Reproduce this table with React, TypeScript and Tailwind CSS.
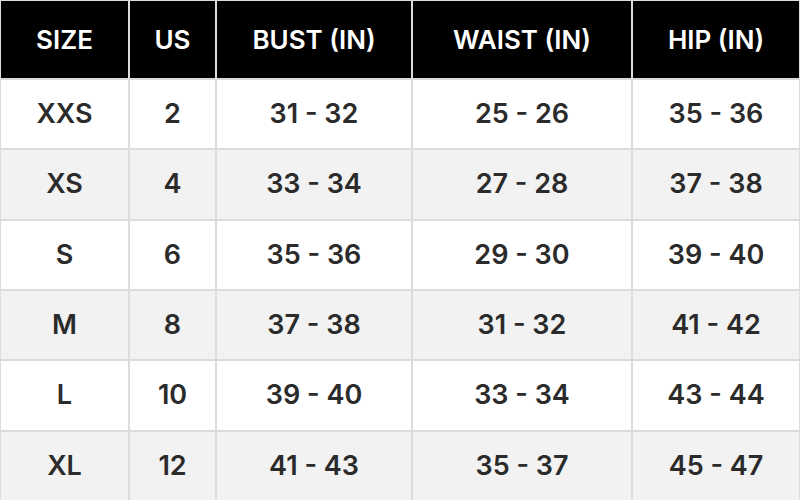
import React from "react";

const headers = ["SIZE", "US", "BUST (IN)", "WAIST (IN)", "HIP (IN)"];
const rows = [
  ["XXS", "2", "31 - 32", "25 - 26", "35 - 36"],
  ["XS", "4", "33 - 34", "27 - 28", "37 - 38"],
  ["S", "6", "35 - 36", "29 - 30", "39 - 40"],
  ["M", "8", "37 - 38", "31 - 32", "41 - 42"],
  ["L", "10", "39 - 40", "33 - 34", "43 - 44"],
  ["XL", "12", "41 - 43", "35 - 37", "45 - 47"],
];

export default function App() {
  return (
    <div
      className="w-[800px] h-[500px] bg-[#dcdcdc] pt-[1px] px-[1px] grid grid-cols-[127px_85px_194px_218px_1fr] grid-rows-[77px_repeat(6,1fr)] gap-[2px] overflow-hidden"
      style={{ fontFamily: "Inter, 'Noto Sans', sans-serif" }}
    >
      {headers.map((h) => (
        <div
          key={h}
          className="bg-black text-white flex items-center justify-center text-[26px] font-semibold"
        >
          {h}
        </div>
      ))}
      {rows.map((r, i) =>
        r.map((c, j) => (
          <div
            key={`${i}-${j}`}
            className={`${i % 2 === 0 ? "bg-white" : "bg-[#f2f2f2]"} text-[#2b2b2b] flex items-center justify-center text-[27px] font-semibold`}
          >
            {c}
          </div>
        ))
      )}
    </div>
  );
}
